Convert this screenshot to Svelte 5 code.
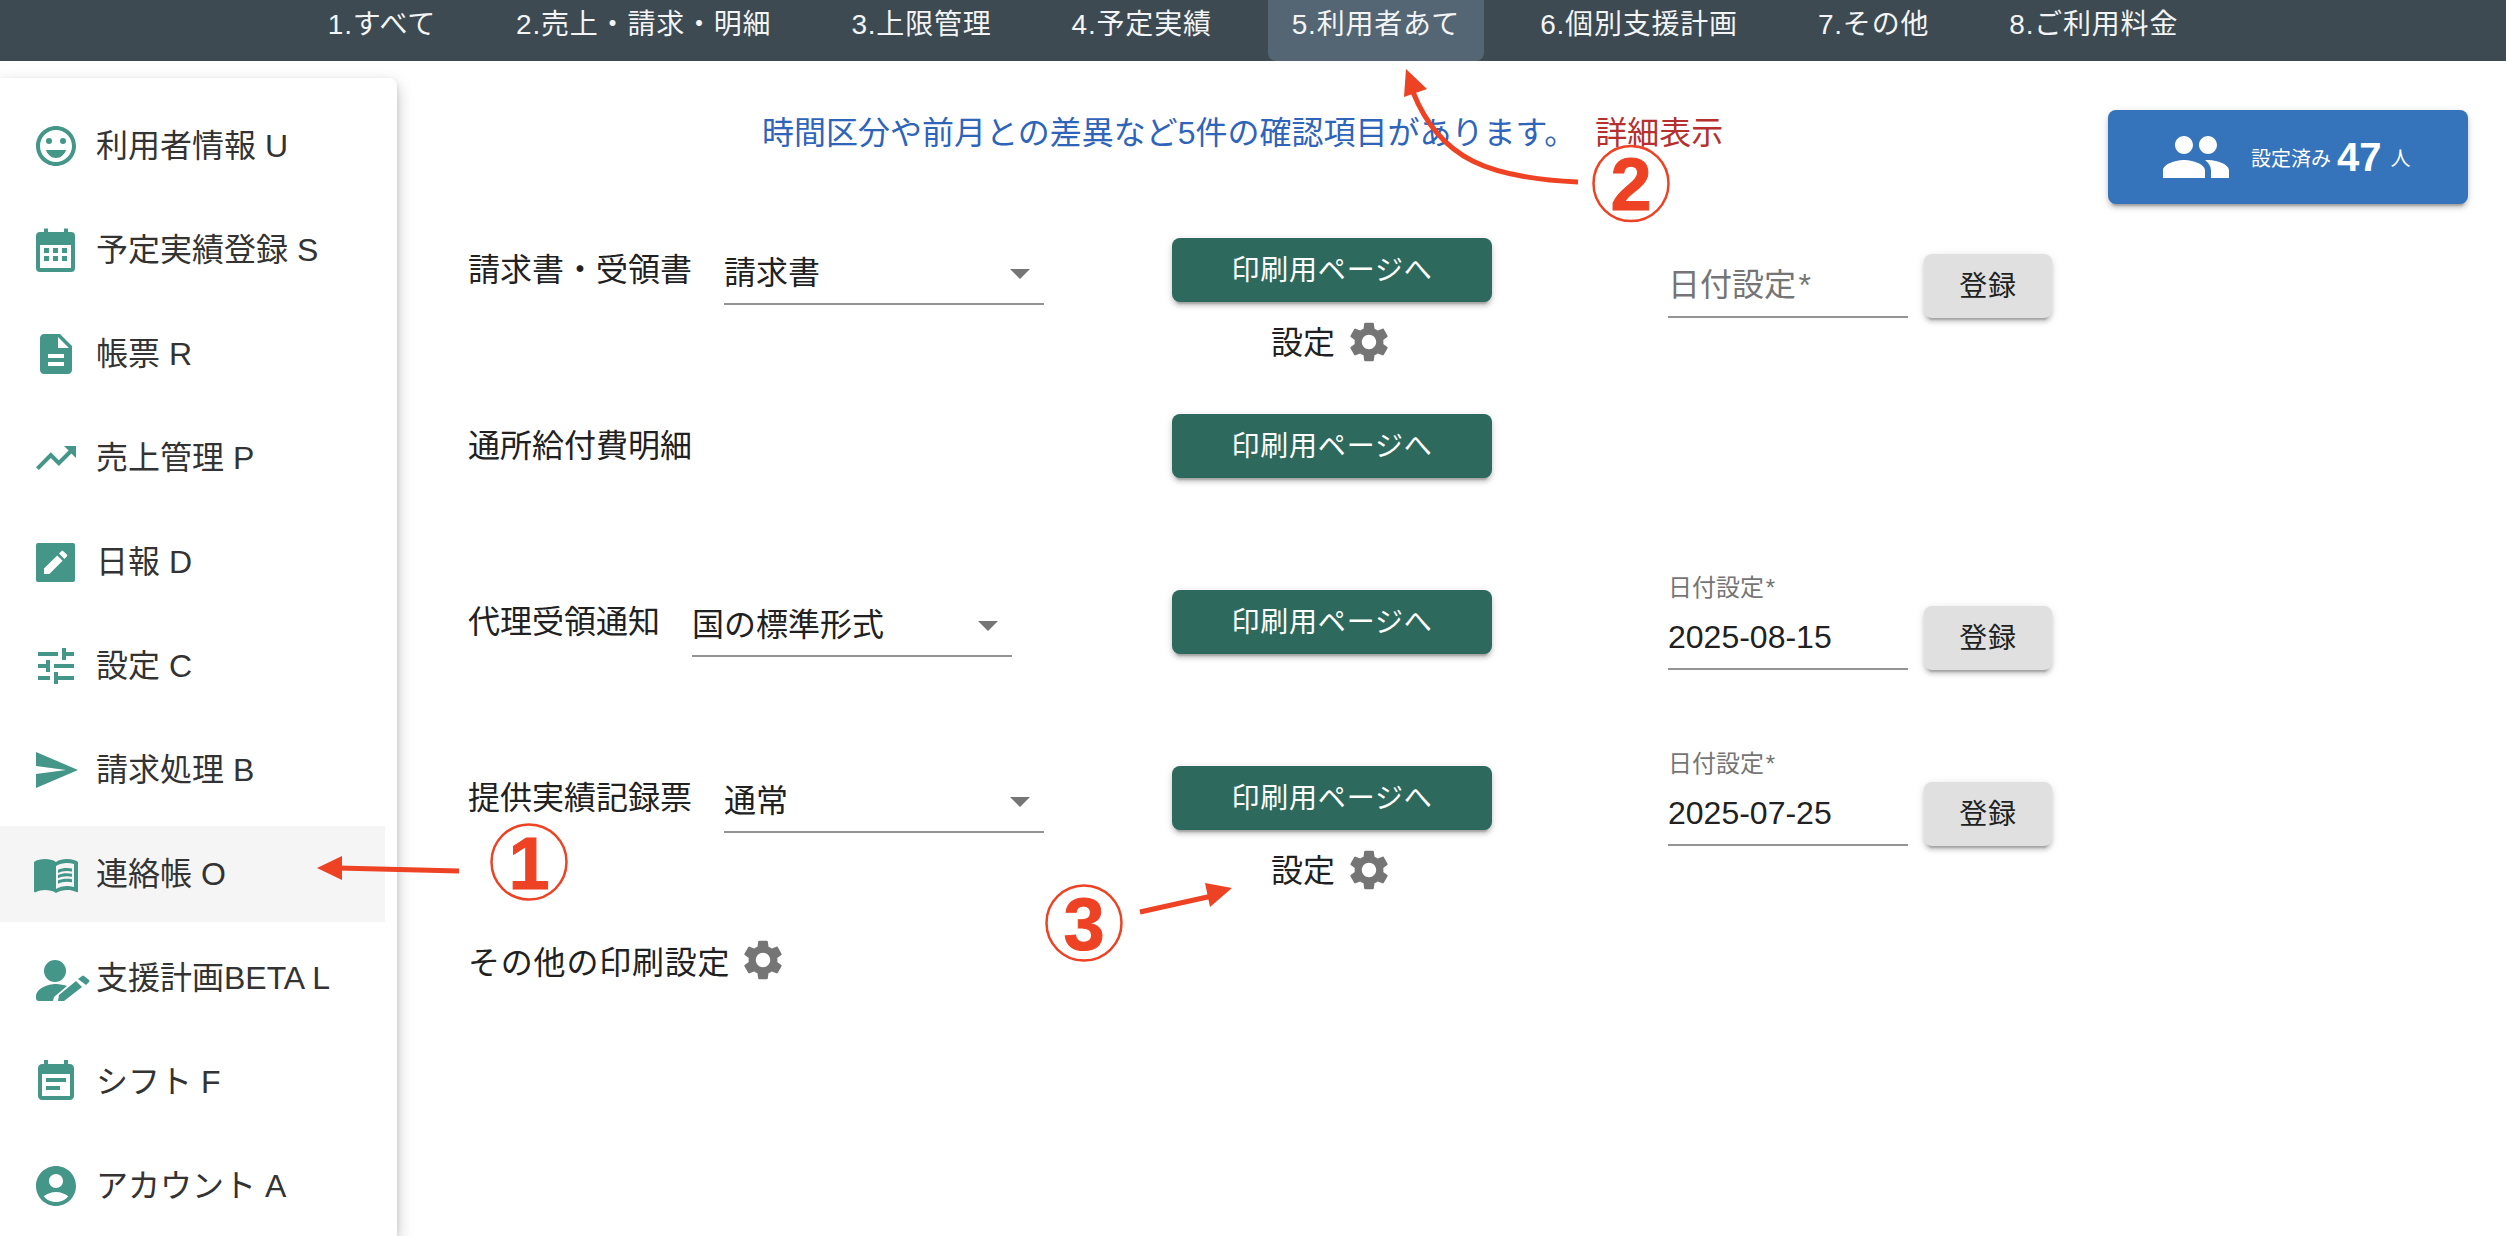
<script lang="ts">
  const tabs = ['1.すべて', '2.売上・請求・明細', '3.上限管理', '4.予定実績', '5.利用者あて', '6.個別支援計画', '7.その他', '8.ご利用料金'];
  const activeTab = 4;

  const gear =
    'M19.14 12.94c.04-.3.06-.61.06-.94 0-.32-.02-.64-.07-.94l2.03-1.58c.18-.14.23-.41.12-.61l-1.92-3.32c-.12-.22-.37-.29-.59-.22l-2.39.96c-.5-.38-1.03-.7-1.62-.94l-.36-2.54c-.04-.24-.24-.41-.48-.41h-3.84c-.24 0-.43.17-.47.41l-.36 2.54c-.59.24-1.13.57-1.62.94l-2.39-.96c-.22-.08-.47 0-.59.22L2.74 8.87c-.12.21-.08.47.12.61l2.03 1.58c-.05.3-.09.63-.09.94s.02.64.07.94l-2.03 1.58c-.18.14-.23.41-.12.61l1.92 3.32c.12.22.37.29.59.22l2.39-.96c.5.38 1.03.7 1.62.94l.36 2.54c.05.24.24.41.48.41h3.84c.24 0 .44-.17.47-.41l.36-2.54c.59-.24 1.13-.56 1.62-.94l2.39.96c.22.08.47 0 .59-.22l1.92-3.32c.12-.22.07-.47-.12-.61l-2.01-1.58zM12 15.6c-1.98 0-3.6-1.62-3.6-3.6s1.62-3.6 3.6-3.6 3.6 1.62 3.6 3.6-1.62 3.6-3.6 3.6z';

  // sidebar icons, 24 unit viewBox unless noted
  const menu = [
    { label: '利用者情報 U', icon: 'M11.99 2C6.47 2 2 6.48 2 12s4.47 10 9.99 10C17.52 22 22 17.52 22 12S17.52 2 11.99 2zM12 20c-4.42 0-8-3.58-8-8s3.58-8 8-8 8 3.58 8 8-3.58 8-8 8zM12 18c2.28 0 4.22-1.66 5-4H7c.78 2.34 2.72 4 5 4zM15.5 8a1.5 1.5 0 1 0 0 3 1.5 1.5 0 0 0 0-3zM8.5 8a1.5 1.5 0 1 0 0 3 1.5 1.5 0 0 0 0-3z' },
    { label: '予定実績登録 S', icon: 'M6 1.25h2V3h8V1.25h2V3h1.5a2 2 0 0 1 2 2v16a2 2 0 0 1-2 2H4a2 2 0 0 1-2-2V5a2 2 0 0 1 2-2h2zM4 9.5V21h15.5V9.5zM6 11h2.5v2.5H6zM10.5 11H13v2.5h-2.5zM15 11h2.5v2.5H15zM6 15h2.5v2.5H6zM10.5 15H13v2.5h-2.5zM15 15h2.5v2.5H15z' },
    { label: '帳票 R', icon: 'M14 2H6c-1.1 0-1.99.9-1.99 2L4 20c0 1.1.89 2 2 2h12c1.1 0 2-.9 2-2V8l-6-6zm2 16H8v-2h8v2zm0-4H8v-2h8v2zm-3-5V3.5L18.5 9H13z' },
    { label: '売上管理 P', icon: 'M16 6l2.29 2.29-4.88 4.88-4-4L2 16.59 3.41 18l6-6 4 4 6.3-6.29L22 12V6z' },
    { label: '日報 D', icon: 'M3 2.5h17.5a1 1 0 0 1 1 1v17.5a1 1 0 0 1-1 1H3a1 1 0 0 1-1-1V3.5a1 1 0 0 1 1-1zM6 15.3V18h2.7l6.6-6.6-2.7-2.7zM17.4 9.3c.3-.3.3-.7 0-1l-1.7-1.7c-.3-.3-.7-.3-1 0l-1.2 1.2 2.7 2.7z' },
    { label: '設定 C', icon: 'M3 17v2h6v-2H3zM3 5v2h10V5H3zm10 16v-2h8v-2h-8v-2h-2v6h2zM7 9v2H3v2h4v2h2V9H7zm14 4v-2H11v2h10zm-6-4h2V7h4V5h-4V3h-2v6z' },
    { label: '請求処理 B', icon: 'M2.01 21L23 12 2.01 3 2 10l15 2-15 2z' },
    { label: '連絡帳 O', icon: 'M21 5c-1.11-.35-2.33-.5-3.5-.5-1.95 0-4.05.4-5.5 1.5-1.45-1.1-3.55-1.5-5.5-1.5S2.45 4.9 1 6v14.65c0 .25.25.5.5.5.1 0 .15-.05.25-.05C3.1 20.45 5.05 20 6.5 20c1.95 0 4.05.4 5.5 1.5 1.35-.85 3.8-1.5 5.5-1.5 1.65 0 3.35.3 4.75 1.05.1.05.15.05.25.05.25 0 .5-.25.5-.5V6c-.6-.45-1.25-.75-2-1zm0 13.5c-1.1-.35-2.3-.5-3.5-.5-1.7 0-4.15.65-5.5 1.5V8c1.35-.85 3.8-1.5 5.5-1.5 1.2 0 2.4.15 3.5.5v11.5zM17.5 10.5c.88 0 1.73.09 2.5.26V9.24c-.79-.15-1.64-.24-2.5-.24-1.7 0-3.24.29-4.5.83v1.66c1.13-.64 2.7-.99 4.5-.99zM13 12.49v1.66c1.13-.64 2.7-.99 4.5-.99.88 0 1.73.09 2.5.26V11.9c-.79-.15-1.64-.24-2.5-.24-1.7 0-3.24.3-4.5.83zM17.5 14.33c-1.7 0-3.24.29-4.5.83v1.66c1.13-.64 2.7-.99 4.5-.99.88 0 1.73.09 2.5.26v-1.52c-.79-.17-1.64-.24-2.5-.24z' },
    { label: '支援計画BETA L', wide: true, icon: 'M23 6a11 11 0 1 1 0 22 11 11 0 0 1 0-22zM4 43c0-9 12-13 20-13 4 0 8 1 11 2L22 43l-1 4H7q-3 0-3-3zM26 47l1-6L44 27l6 6-18 14zM46 25l4-3q1-1 2 0l5 4q1 1 0 2l-3 3z' },
    { label: 'シフト F', icon: 'M17 10H7v2h10v-2zm2-7h-1V1h-2v2H8V1H6v2H5c-1.11 0-1.99.9-1.99 2L3 19c0 1.1.89 2 2 2h14c1.1 0 2-.9 2-2V5c0-1.1-.9-2-2-2zm0 16H5V8h14v11zm-5-5H7v2h7v-2z' },
    { label: 'アカウント A', icon: 'M12 2C6.48 2 2 6.48 2 12s4.48 10 10 10 10-4.48 10-10S17.52 2 12 2zm0 4c1.93 0 3.5 1.57 3.5 3.5S13.93 13 12 13s-3.5-1.57-3.5-3.5S10.07 6 12 6zm0 14c-2.03 0-4.43-.82-6.14-2.88C7.55 15.8 9.68 15 12 15s4.45.8 6.14 2.12C16.43 19.18 14.03 20 12 20z' },
  ];
  const activeMenu = 7;

  const rows = [
    { label: '請求書・受領書', select: '請求書', settings: true, date: '' },
    { label: '通所給付費明細', select: '', settings: false, date: null },
    { label: '代理受領通知', select: '国の標準形式', settings: false, date: '2025-08-15' },
    { label: '提供実績記録票', select: '通常', settings: true, date: '2025-07-25' },
  ];
</script>

<div class="page">
  <nav class="tabs">
    {#each tabs as tab, i}
      <button class="tab" class:active={i === activeTab}>{tab}</button>
    {/each}
  </nav>

  <div class="body">
    <aside class="sidebar">
      {#each menu as item, i}
        <div class="menu-item" class:selected={i === activeMenu}>
          {#if item.wide}
            <svg class="icon-wide" viewBox="0 0 60 48"><path d={item.icon} /></svg>
          {:else}
            <svg class="icon" viewBox="0 0 24 24" fill-rule={i === 1 || i === 4 ? 'evenodd' : 'nonzero'}><path d={item.icon} /></svg>
          {/if}
          <span class="menu-label">{item.label}</span>
        </div>
      {/each}
    </aside>

    <main class="content">
      <header class="top">
        <p class="notice">時間区分や前月との差異など5件の確認項目があります。<span class="detail">詳細表示</span></p>
        <button class="count">
          <svg class="people" viewBox="0 0 24 24"><path d="M16 11c1.66 0 2.99-1.34 2.99-3S17.66 5 16 5c-1.66 0-3 1.34-3 3s1.34 3 3 3zm-8 0c1.66 0 2.99-1.34 2.99-3S9.66 5 8 5C6.34 5 5 6.34 5 8s1.34 3 3 3zm0 2c-2.33 0-7 1.17-7 3.5V19h14v-2.5c0-2.33-4.67-3.5-7-3.5zm8 0c-.29 0-.62.02-.97.05 1.16.84 1.97 1.97 1.97 3.45V19h6v-2.5c0-2.33-4.67-3.5-7-3.5z" /></svg>
          <span class="count-small">設定済み</span>
          <span class="count-num">47</span>
          <span class="count-small">人</span>
        </button>
      </header>

      {#each rows as row}
        <section class="row">
          <div class="row-left">
            <span class="row-label">{row.label}</span>
            {#if row.select}
              <div class="select">
                <span class="select-value">{row.select}</span>
                <svg class="caret" viewBox="0 0 24 24"><path d="M7 10l5 5 5-5z" /></svg>
              </div>
            {/if}
          </div>
          <div class="row-print">
            <button class="print"><span class="raise">印刷用ページへ</span></button>
            {#if row.settings}
              <div class="settings">
                <span class="raise">設定</span>
                <svg class="gear" viewBox="0 0 24 24"><path d={gear} /></svg>
              </div>
            {/if}
          </div>
          {#if row.date !== null}
            <div class="row-date">
              <div class="date-label">{row.date ? '日付設定 *' : ''}</div>
              <div class="date-line">
                <div class="date-input" class:empty={!row.date}>{row.date || '日付設定 *'}</div>
                <button class="register"><span class="raise">登録</span></button>
              </div>
            </div>
          {/if}
        </section>
      {/each}

      <div class="other">
        <span>その他の印刷設定</span>
        <svg class="gear" viewBox="0 0 24 24"><path d={gear} /></svg>
      </div>
    </main>
  </div>

  <!-- red callouts pasted on top of the screenshot -->
  <svg class="callouts" viewBox="0 0 2506 1236">
    <path class="line" d="M459 871L338 868" />
    <path class="head" d="M317 868L342 856V880z" />
    <circle class="ring" cx="529" cy="862" r="37.5" />
    <text class="digit" x="529" y="889">1</text>

    <path class="line" d="M1578 182C1490 178 1440 160 1413 92" />
    <path class="head" d="M1406 69L1404 97L1427 89z" />
    <circle class="ring" cx="1631" cy="183.5" r="37.5" />
    <text class="digit" x="1631" y="210">2</text>

    <path class="line" d="M1140 912L1212 896" />
    <path class="head" d="M1232 888L1205 883L1210 907z" />
    <circle class="ring" cx="1084" cy="923" r="37.5" />
    <text class="digit" x="1084" y="950">3</text>
  </svg>
</div>

<style>
  :global(body) {
    margin: 0;
    background: #fff;
  }

  .page {
    position: relative;
    width: 2506px;
    height: 1236px;
    overflow: hidden;
    font-family: 'Liberation Sans', 'Noto Sans CJK JP', sans-serif;
    font-size: 32px;
    color: #212121;
  }

  button {
    font-family: inherit;
    border: none;
    cursor: pointer;
  }

  /* CJK fallback sits low in the line box, lift it back to centre */
  .raise {
    display: block;
    margin-bottom: 4px;
  }

  .tabs {
    display: flex;
    justify-content: center;
    gap: 32px;
    height: 61px;
    background: #3d4a52;
  }

  .tab {
    padding: 0 24px 18px;
    background: transparent;
    color: #f2f4f5;
    font-size: 28px;
    letter-spacing: 0.8px;
    border-radius: 0 0 8px 8px;
    white-space: nowrap;
  }

  .tab.active {
    background: #546673;
  }

  .body {
    display: flex;
    height: 1175px;
  }

  .sidebar {
    flex: none;
    width: 397px;
    margin-top: 17px;
    padding-top: 20px;
    box-sizing: border-box;
    background: #fff;
    border-radius: 0 8px 0 0;
    box-shadow:
      0 6px 16px rgba(0, 0, 0, 0.25),
      0 2px 4px rgba(0, 0, 0, 0.1);
    display: flex;
    flex-direction: column;
    gap: 8px;
  }

  .menu-item {
    flex: none;
    display: flex;
    align-items: center;
    height: 96px;
    margin-right: 12px;
    padding-left: 32px;
    color: #333;
  }

  .menu-item.selected {
    background: #f5f5f5;
  }

  .icon {
    flex: none;
    width: 48px;
    height: 48px;
    margin-right: 16px;
    fill: #449688;
  }

  .icon-wide {
    flex: none;
    width: 60px;
    height: 48px;
    margin-right: 4px;
    fill: #449688;
  }

  .menu-label {
    margin-bottom: 6px;
    white-space: nowrap;
  }

  .content {
    flex: 1;
    min-width: 0;
  }

  .top {
    display: flex;
    align-items: flex-start;
    justify-content: space-between;
    padding: 49px 38px 14px 365px;
  }

  .notice {
    margin: 0;
    line-height: 46px;
    color: #2f65b9;
    white-space: nowrap;
  }

  .detail {
    margin-left: 19px;
    color: #b5302f;
  }

  .count {
    display: flex;
    align-items: center;
    width: 360px;
    height: 94px;
    padding: 0 0 0 52px;
    background: #3574ba;
    color: #fff;
    border-radius: 8px;
    box-shadow:
      0 6px 2px -4px rgba(0, 0, 0, 0.2),
      0 4px 4px 0 rgba(0, 0, 0, 0.14),
      0 2px 10px 0 rgba(0, 0, 0, 0.12);
  }

  .people {
    width: 72px;
    height: 72px;
    margin-right: 19px;
    fill: #fff;
  }

  .count-small {
    font-size: 20px;
  }

  .count-num {
    margin: 0 9px 0 6px;
    font-size: 40px;
    font-weight: 700;
  }

  .row {
    display: flex;
    align-items: flex-start;
    height: 176px;
    padding-left: 71px;
  }

  .row-left {
    flex: none;
    display: flex;
    align-items: flex-start;
    gap: 32px;
    width: 704px;
    padding-top: 20px;
  }

  .row-label {
    line-height: 64px;
    white-space: nowrap;
  }

  .select {
    display: flex;
    align-items: center;
    justify-content: space-between;
    box-sizing: border-box;
    width: 320px;
    height: 67px;
    padding-top: 5px;
    border-bottom: 2px solid #949494;
  }

  .select-value {
    margin-bottom: 6px;
  }

  .caret {
    width: 48px;
    height: 48px;
    fill: #757575;
  }

  .row-print {
    flex: none;
    width: 320px;
    padding-top: 20px;
  }

  .print {
    display: block;
    width: 320px;
    height: 64px;
    background: #2d6a5d;
    color: #fff;
    font-size: 28px;
    letter-spacing: 0.8px;
    border-radius: 8px;
    box-shadow:
      0 6px 2px -4px rgba(0, 0, 0, 0.2),
      0 4px 4px 0 rgba(0, 0, 0, 0.14),
      0 2px 10px 0 rgba(0, 0, 0, 0.12);
  }

  .settings {
    display: flex;
    align-items: center;
    justify-content: center;
    gap: 10px;
    margin-top: 15px;
  }

  .gear {
    flex: none;
    width: 48px;
    height: 48px;
    fill: #757575;
  }

  .row-date {
    flex: none;
    margin-left: 176px;
  }

  .date-label {
    height: 36px;
    font-size: 24px;
    line-height: 36px;
    word-spacing: -0.2em;
    color: #757575;
  }

  .date-line {
    display: flex;
    gap: 16px;
  }

  .date-input {
    box-sizing: border-box;
    width: 240px;
    height: 64px;
    line-height: 62px;
    border-bottom: 2px solid #949494;
  }

  .date-input.empty {
    word-spacing: -0.2em;
    color: #757575;
  }

  .register {
    width: 128px;
    height: 64px;
    background: #e0e0e0;
    color: #212121;
    font-size: 28px;
    letter-spacing: 0.8px;
    border-radius: 8px;
    box-shadow:
      0 6px 2px -4px rgba(0, 0, 0, 0.2),
      0 4px 4px 0 rgba(0, 0, 0, 0.14),
      0 2px 10px 0 rgba(0, 0, 0, 0.12);
  }

  .other {
    display: flex;
    align-items: center;
    gap: 9px;
    margin: 14px 0 0 71px;
    letter-spacing: 0.8px;
  }

  .callouts {
    position: absolute;
    left: 0;
    top: 0;
    width: 2506px;
    height: 1236px;
    pointer-events: none;
  }

  .line {
    fill: none;
    stroke: #ee4224;
    stroke-width: 5;
  }

  .head {
    fill: #ee4224;
  }

  .ring {
    fill: none;
    stroke: #ee4224;
    stroke-width: 2.5;
  }

  .digit {
    fill: #ee4224;
    stroke: #ee4224;
    stroke-width: 1;
    font-size: 74px;
    font-weight: 700;
    text-anchor: middle;
  }
</style>
